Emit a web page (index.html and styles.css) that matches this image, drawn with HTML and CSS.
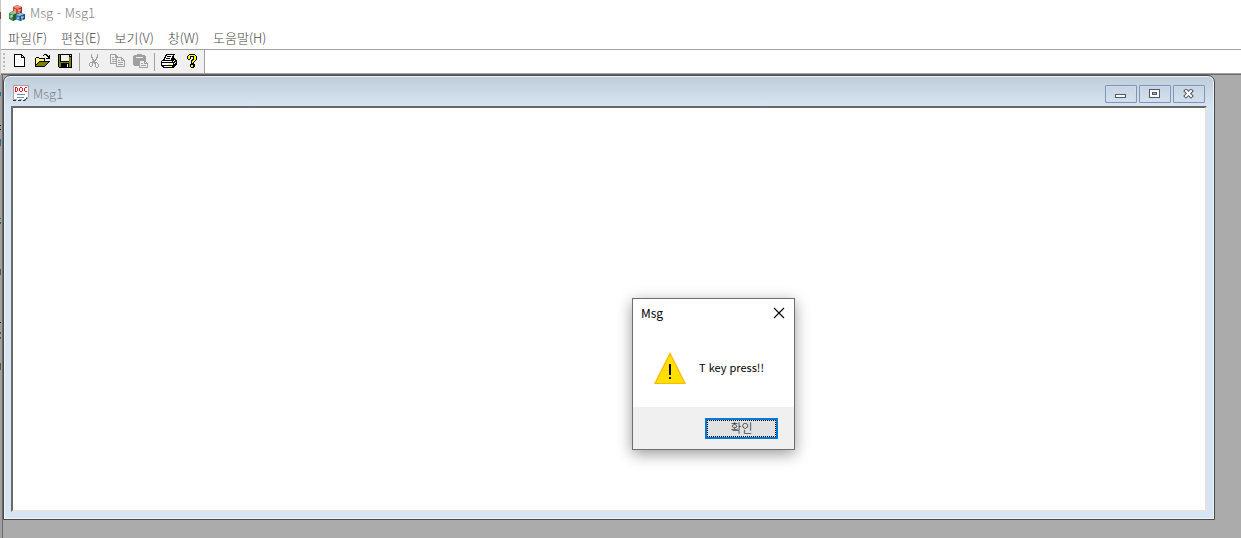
FILE: index.html
```html
<!DOCTYPE html>
<html lang="ko">
<head>
    <meta charset="UTF-8">
    <meta name="viewport" content="width=device-width, initial-scale=1.0">
    <title>Msg - Msg1</title>
    <link rel="stylesheet" href="styles.css">
</head>
<body>
    <div class="app">
        <header class="titlebar">
            <svg class="app-icon" width="18" height="18" viewBox="0 0 18 18">
                <path d="M5 3l4-2 5 2v7l-5 2-4-2z" fill="#d8432f"/>
                <path d="M5 3l4-2 5 2-4 2z" fill="#f2907c"/>
                <path d="M10 5l4-2v7l-4 2z" fill="#a92a20"/>
                <path d="M1 9l4-2 4 2v6l-4 2-4-2z" fill="#3f8a4a"/>
                <path d="M1 9l4-2 4 2-4 2z" fill="#8cc08c"/>
                <path d="M5 11l4-2v6l-4 2z" fill="#27603a"/>
                <path d="M8 11l4-2 5 1v5l-5 2-4-2z" fill="#2f7cb8"/>
                <path d="M8 11l4-2 5 1-5 2z" fill="#8fc3e4"/>
                <path d="M12 12l5-2v5l-5 2z" fill="#174f87"/>
                <path d="M7 5v4M11 6v3M10 6h3M3 11v3M3 12h2M10 13v2M14 13v3M13 13h3" stroke="#fff" stroke-width=".8" fill="none"/>
            </svg>
            <span>Msg - Msg1</span>
        </header>

        <nav class="menu">
            <button type="button">파일(F)</button>
            <button type="button">편집(E)</button>
            <button type="button">보기(V)</button>
            <button type="button">창(W)</button>
            <button type="button">도움말(H)</button>
        </nav>

        <div class="toolbar-row">
            <div class="toolbar">
                <span class="grip"></span>
                <button type="button" aria-label="새로 만들기">
                    <svg width="16" height="16" viewBox="0 0 16 16">
                        <path d="M3 1h8v1h1v1h1v1h1v10H3z" fill="#000"/>
                        <path d="M4 2h6v3h3v8H4zM11 3h1v1h-1z" fill="#fff"/>
                    </svg>
                </button>
                <button type="button" aria-label="열기">
                    <svg width="16" height="16" viewBox="0 0 16 16">
                        <path d="M2 4h3v1h6v3h5v1h-1v1h-1v1h-1v1h-1v1h-1v1H1V5h1z" fill="#000"/>
                        <path d="M2 5h3v1h5v2H5v1H4v1H3v1H2z" fill="#ffff80"/>
                        <path d="M5 9h9v1h-1v1h-1v1h-1v1H2v-1h1v-1h1v-1h1z" fill="#808000"/>
                        <path d="M9 2h1V1h3v1h1v1h1V2h1v4h-4V5h2V4h-1V3h-1V2h-2v1H9z" fill="#000"/>
                    </svg>
                </button>
                <button type="button" aria-label="저장">
                    <svg width="16" height="16" viewBox="0 0 16 16">
                        <path d="M1 1h14v14H2v-1H1z" fill="#000"/>
                        <path d="M2 2h1v7h9V4h2v10H2z" fill="#808000"/>
                        <path d="M4 2h8v6H4zM13 2h1v1h-1z" fill="#f0f0f0"/>
                        <path d="M4 10h8v4H4z" fill="#000"/>
                        <path d="M10 11h1v3h-1z" fill="#f0f0f0"/>
                    </svg>
                </button>
                <span class="separator"></span>
                <button type="button" aria-label="잘라내기">
                    <svg width="16" height="16" viewBox="0 0 16 16">
                        <path d="M5 1h1v3h1v2h1v1h1V6h1V4h1V1h1v4h-1v2h-1v1H9v1h2v1h1v1h1v3h-1v1h-2v-1H9v-3H8v-1H7v3H6v1H4v-1H3v-3h1V9h2V8h1V7H6V5H5zM4 10v3h2v-3zM10 10v4h2v-3h-1v-1z" fill="#a0a0a0" fill-rule="evenodd"/>
                    </svg>
                </button>
                <button type="button" aria-label="복사">
                    <svg width="16" height="16" viewBox="0 0 16 16">
                        <path d="M1 1h6v1h1v1h1v8H1zM2 2v8h6V5H6V2zM3 4h2v1H3zM3 6h4v1H3zM3 8h4v1H3z" fill="#a0a0a0" fill-rule="evenodd"/>
                        <path d="M7 4h6v1h1v1h1v1h1v7H7z" fill="#a0a0a0"/>
                        <path d="M8 5h4v3h3v5H8zM13 6h1v1h-1z" fill="#f0f0f0"/>
                        <path d="M9 7h2v1H9zM9 9h5v1H9zM9 11h5v1H9z" fill="#a0a0a0"/>
                    </svg>
                </button>
                <button type="button" aria-label="붙여넣기">
                    <svg width="16" height="16" viewBox="0 0 16 16">
                        <path d="M2 2h3V1h5v1h3v1h1v10H2v-1H1V3h1z" fill="#a0a0a0"/>
                        <path d="M4 4h7v1H4z" fill="#f0f0f0"/>
                        <path d="M7 7h6v1h1v1h1v1h1v5H7z" fill="#a0a0a0"/>
                        <path d="M8 8h4v3h3v3H8zM13 9h1v1h-1z" fill="#f0f0f0"/>
                        <path d="M9 10h2v1H9zM9 12h5v1H9z" fill="#a0a0a0"/>
                    </svg>
                </button>
                <span class="separator"></span>
                <button type="button" aria-label="인쇄">
                    <svg width="16" height="16" viewBox="0 0 16 16">
                        <path d="M5 1h9v1h-1v3h1v1h1v1h1v5h-1v1h-1v1h-1v1H2v-1H1v-1H0V8h1V7h1V6h1V4h1V2h1z" fill="#000"/>
                        <path d="M6 2h6v1h-1v2h-1v2H4V5h1V3h1zM1 8h10v1H1zM1 10h11v2H1zM3 13h8v1H3zM13 7h1v1h-1zM12 8h1v1h-1zM14 9h1v1h-1zM13 10h1v1h-1z" fill="#fff"/>
                        <path d="M6 3h4v1H6zM5 5h4v1H5z" fill="#000"/>
                        <path d="M7 11h3v1H7z" fill="#ff0"/>
                    </svg>
                </button>
                <button type="button" aria-label="도움말">
                    <svg width="16" height="16" viewBox="0 0 16 16">
                        <path d="M5 1h6v1h1v1h1v4h-1v1h-1v1h-1v2h1v3h-1v1H7v-1H6v-3h1V7h1V6h1V4H7v2H6v1H4V6H3V3h1V2h1z" fill="#000"/>
                        <path d="M5 2h5v1H6v3H4V3h1zM10 2h1v1h1v4h-1v1h-1v1H9v1H8V8h1V7h1zM7 12h2v2H7z" fill="#ff0"/>
                    </svg>
                </button>
            </div>
        </div>

        <main class="workspace">
            <section class="child">
                <div class="child-title">
                    <svg class="doc-icon" width="16" height="17" viewBox="0 0 16 17">
                        <path d="M0 0h16v12h-1v2h-2v2h-3v-1H8v1H5v-1H3v1H0z" fill="#a4a4a4"/>
                        <path d="M1 1h14v11h-2v2h-2v1H9v-1H6v1H4v-1H1z" fill="#fff"/>
                        <path d="M2 2h2v1h1v3H4v1H2zM3 3v3h1V3zM7 2h2v1h1v3H9v1H7V6H6V3h1zM7 3v3h2V3zM12 2h2v1h-2v3h2v1h-2V6h-1V3h1z" fill="#f01818" fill-rule="evenodd"/>
                        <path d="M4 9h8v1H4zM4 12h7v1H4z" fill="#6d8fb8"/>
                        <path d="M0 15h3v1H0zM5 15h3v1H5zM10 15h2v1h-2zM12 14h1v1h-1zM13 13h1v1h-1z" fill="#333"/>
                    </svg>
                    <span>Msg1</span>
                    <div class="child-buttons">
                        <button type="button" aria-label="최소화">
                            <svg width="12" height="10" viewBox="0 0 12 10">
                                <rect x="0" y="5" width="11" height="4" rx="1" fill="#535666"/>
                                <rect x="1" y="6" width="9" height="2" fill="#fff"/>
                            </svg>
                        </button>
                        <button type="button" aria-label="최대화">
                            <svg width="12" height="10" viewBox="0 0 12 10">
                                <rect x="0" y="0" width="11" height="9" rx="1" fill="#535666"/>
                                <rect x="1" y="1" width="9" height="7" fill="#fff"/>
                                <path d="M3 3h5v3H3z" fill="#535666"/>
                                <path d="M4 4h3v1H4z" fill="#9fb0c8"/>
                            </svg>
                        </button>
                        <button type="button" aria-label="닫기">
                            <svg class="smooth" width="12" height="10" viewBox="0 0 12 10">
                                <path d="M3 2l5 5M8 2l-5 5" stroke="#535666" stroke-width="4" stroke-linecap="square"/>
                                <path d="M3 2l5 5M8 2l-5 5" stroke="#fff" stroke-width="2" stroke-linecap="square"/>
                            </svg>
                        </button>
                    </div>
                </div>
                <div class="document"></div>
            </section>
        </main>

        <!-- slivers of the window behind -->
        <svg class="behind" width="1" height="380" viewBox="0 0 1 380">
            <path d="M0 0h1v75H0z" fill="#c8c8c8"/>
            <path d="M0 12h1v7H0zM0 269h1v6H0zM0 332h1v2H0zM0 337h1v2H0zM0 363h1v7H0z" fill="#6b5330"/>
            <path d="M0 92h1v4H0zM0 139h1v7H0z" fill="#2b7183"/>
            <path d="M0 125h1v1H0zM0 129h1v1H0zM0 322h1v1H0z" fill="#222"/>
            <path d="M0 218h1v1H0zM0 222h1v2H0z" fill="#28702c"/>
        </svg>
    </div>

    <div class="dialog" role="dialog" aria-labelledby="dialog-title">
        <div class="dialog-title">
            <span id="dialog-title">Msg</span>
            <button type="button" aria-label="닫기">
                <svg class="smooth" width="12" height="12" viewBox="0 0 12 12">
                    <path d="M1 1l10 10M11 1L1 11" stroke="#000" stroke-width="1.1"/>
                </svg>
            </button>
        </div>
        <div class="dialog-body">
            <svg class="smooth" width="32" height="32" viewBox="0 0 32 32">
                <path d="M16 0l16 32H0z" fill="#ffb900"/>
                <path d="M16 3l14 28H2z" fill="#ffe000"/>
                <path d="M15 12h2v11h-2zM15 25h2v2h-2z" fill="#000"/>
            </svg>
            <p>T key press!!</p>
        </div>
        <div class="dialog-footer">
            <button type="button" class="ok">확인</button>
        </div>
    </div>
</body>
</html>
```

FILE: styles.css
```css
* {
    box-sizing: border-box;
}
body {
    margin: 0;
    font-family: "Noto Sans CJK KR", sans-serif;
    font-size: 13px;
    font-weight: 300;
    line-height: 16px;
    background: #fff;
    overflow: hidden;
}
button {
    margin: 0;
    padding: 0;
    border: 0;
    background: none;
    font: inherit;
    color: inherit;
}
svg {
    display: block;
    flex: none;
    shape-rendering: crispEdges;
}
.smooth,
.app-icon {
    shape-rendering: auto;
}
.app {
    position: relative;
    display: flex;
    flex-direction: column;
    height: 100vh;
}
.titlebar {
    display: flex;
    align-items: center;
    gap: 4px;
    height: 28px;
    padding: 0 0 2px 8px;
    color: #808080;
}
.menu {
    display: flex;
    align-items: center;
    gap: 14px;
    height: 21px;
    padding: 0 0 2px 8px;
    color: #484848;
}

/* Toolbar */
.toolbar-row {
    display: flex;
    height: 25px;
    border-top: 1px solid #a0a0a0;
    border-bottom: 1px solid #a0a0a0;
}
.toolbar {
    display: flex;
    padding-left: 2px;
    background: #f0f0f0;
    border-right: 1px solid #a0a0a0;
}
.toolbar button {
    width: 23px;
    padding: 3px 4px 0 3px;
    display: flex;
}
.grip {
    width: 6px;
    margin: 3px 0;
    background: repeating-linear-gradient(#b8b8b8 0 2px, #f0f0f0 2px 4px) 1px 0 / 2px 100% no-repeat;
}
.separator {
    width: 6px;
    margin: 3px 0 2px;
    background: linear-gradient(#a0a0a0, #a0a0a0) 2px 0 / 1px 100% no-repeat;
}

/* MDI area */
.workspace {
    flex: 1;
    display: flex;
    padding: 0 26px 18px 1px;
    background: #ababab;
    border-left: 2px solid #a0a0a0;
    border-top: 1px solid #696969;
    box-shadow: inset 1px 0 #696969;
}
.child {
    flex: 1;
    display: flex;
    flex-direction: column;
    padding: 0 7px 7px;
    background: #d7e4f2;
    border: 1px solid #484848;
    border-radius: 7px 7px 0 0;
    box-shadow: inset 0 0 0 1px #eef4fa;
    background-image: linear-gradient(#bfcddb, #d7e4f2);
    background-size: 100% 31px;
    background-repeat: no-repeat;
}
.child-title {
    display: flex;
    align-items: center;
    gap: 4px;
    height: 30px;
    padding: 5px 2px 0;
    color: #808080;
}
.child-buttons {
    display: flex;
    gap: 2px;
    margin-left: auto;
}
.child-buttons button {
    display: flex;
    align-items: center;
    justify-content: center;
    width: 32px;
    height: 18px;
    border: 1px solid #8395b5;
    border-radius: 1px;
    box-shadow: inset 0 0 0 1px #cedbea;
}
.document {
    flex: 1;
    background: #fff;
    border: 2px solid;
    border-color: #696969 #e3e3e3 #e3e3e3 #696969;
}
.behind {
    position: absolute;
    left: 0;
    top: 0;
}

/* Message box */
.dialog {
    position: absolute;
    left: 632px;
    top: 298px;
    width: 163px;
    background: #fff;
    border: 1px solid #6e6e6e;
    box-shadow: 0 4px 14px rgba(0, 0, 0, 0.4);
    color: #000;
    font-size: 12px;
    font-weight: 400;
}
.dialog-title {
    display: flex;
    align-items: center;
    justify-content: space-between;
    height: 29px;
    padding: 0 9px 2px 8px;
}
.dialog-body {
    display: flex;
    align-items: center;
    gap: 13px;
    height: 79px;
    padding-left: 21px;
    font-size: 11px;
}
.dialog-body p {
    margin: 0;
    padding-bottom: 2px;
}
.dialog-footer {
    display: flex;
    justify-content: flex-end;
    height: 42px;
    padding: 11px 16px 10px;
    background: #f0f0f0;
}
.ok {
    width: 73px;
    padding-bottom: 2px;
    background: #e1e1e1;
    border: 2px solid #0078d7;
    outline: 1px dotted #000;
    outline-offset: -3px;
    font-size: 12px;
    font-weight: 300;
    line-height: 15px;
}
```
